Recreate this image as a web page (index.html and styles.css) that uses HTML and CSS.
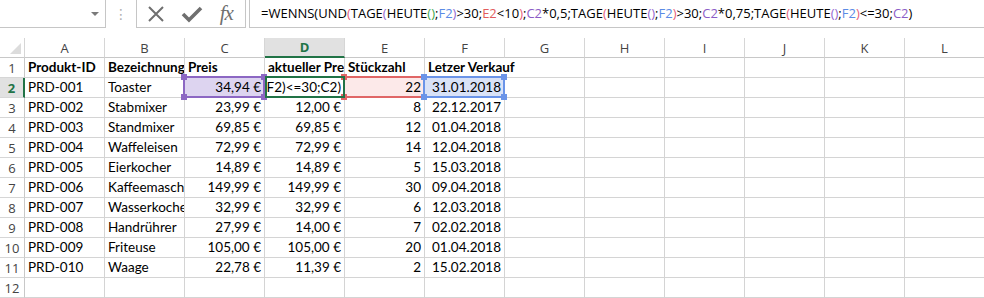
FILE: index.html
```html
<!DOCTYPE html>
<html lang="de">
<head>
    <meta charset="UTF-8">
    <title>Produkte</title>
    <link rel="stylesheet" href="styles.css">
</head>
<body>

    <!-- Formula bar -->
    <div class="formula-bar">
        <div class="name-box"><span class="caret"></span></div>
        <div class="grip">&#8942;</div>
        <div class="fx-box">
            <svg width="18" height="18" viewBox="0 0 18 18"><path d="M2 2 L16 16 M16 2 L2 16" stroke="#6f6f6f" stroke-width="2" fill="none"/></svg>
            <svg width="22" height="18" viewBox="0 0 22 18"><path d="M2 9 L8 15 L20 3" stroke="#6f6f6f" stroke-width="3.6" fill="none"/></svg>
            <span class="fx">fx</span>
        </div>
        <div class="formula-input">=WENNS(UND<span class="p1">(</span>TAGE<span class="p2">(</span>HEUTE<span class="p3">()</span>;<span class="rf">F2</span><span class="p2">)</span>&gt;30;<span class="re">E2</span>&lt;10<span class="p1">)</span>;<span class="rc">C2</span>*0,5;TAGE<span class="p1">(</span>HEUTE<span class="p2">()</span>;<span class="rf">F2</span><span class="p1">)</span>&gt;30;<span class="rc">C2</span>*0,75;TAGE<span class="p1">(</span>HEUTE<span class="p2">()</span>;<span class="rf">F2</span><span class="p1">)</span>&lt;=30;<span class="rc">C2</span>)</div>
    </div>

    <!-- Sheet -->
    <div class="sheet">
        <div class="h corner"><span class="tri"></span></div>
        <div class="h">A</div><div class="h">B</div><div class="h">C</div><div class="h sel">D</div>
        <div class="h">E</div><div class="h">F</div><div class="h">G</div><div class="h">H</div>
        <div class="h">I</div><div class="h">J</div><div class="h">K</div><div class="h">L</div>

        <div class="rh">1</div>
        <div class="c b">Produkt-ID</div><div class="c b">Bezeichnung</div><div class="c b">Preis</div><div class="c b">aktueller Preis</div>
        <div class="c b">Stückzahl</div><div class="c b spill">Letzer Verkauf</div><div class="c"></div><div class="c"></div>
        <div class="c"></div><div class="c"></div><div class="c"></div><div class="c"></div>

        <div class="rh sel">2</div>
        <div class="c">PRD-001</div><div class="c">Toaster</div>
        <div class="c r fill-c">34,94 €<span class="range range-c"><i class="tl"></i><i class="tr"></i><i class="bl"></i><i class="br"></i></span></div>
        <div class="c edit"><div class="edit-clip"><span class="edit-text">=WENNS(UND(TAGE(HEUTE();F2)&gt;30;E2&lt;10);C2*0,5;TAGE(HEUTE();F2)&gt;30;C2*0,75;TAGE(HEUTE();F2)&lt;=30;C2)</span></div><span class="active"></span></div>
        <div class="c r fill-e">22<span class="range range-e"><i class="tl"></i><i class="tr"></i><i class="bl"></i><i class="br"></i></span></div>
        <div class="c r fill-f">31.01.2018<span class="range range-f"><i class="tl"></i><i class="tr"></i><i class="bl"></i><i class="br"></i></span></div>
        <div class="c"></div><div class="c"></div><div class="c"></div><div class="c"></div><div class="c"></div><div class="c"></div>

        <div class="rh">3</div>
        <div class="c">PRD-002</div><div class="c">Stabmixer</div><div class="c r">23,99 €</div><div class="c r">12,00 €</div><div class="c r">8</div><div class="c r">22.12.2017</div>
        <div class="c"></div><div class="c"></div><div class="c"></div><div class="c"></div><div class="c"></div><div class="c"></div>

        <div class="rh">4</div>
        <div class="c">PRD-003</div><div class="c">Standmixer</div><div class="c r">69,85 €</div><div class="c r">69,85 €</div><div class="c r">12</div><div class="c r">01.04.2018</div>
        <div class="c"></div><div class="c"></div><div class="c"></div><div class="c"></div><div class="c"></div><div class="c"></div>

        <div class="rh">5</div>
        <div class="c">PRD-004</div><div class="c">Waffeleisen</div><div class="c r">72,99 €</div><div class="c r">72,99 €</div><div class="c r">14</div><div class="c r">12.04.2018</div>
        <div class="c"></div><div class="c"></div><div class="c"></div><div class="c"></div><div class="c"></div><div class="c"></div>

        <div class="rh">6</div>
        <div class="c">PRD-005</div><div class="c">Eierkocher</div><div class="c r">14,89 €</div><div class="c r">14,89 €</div><div class="c r">5</div><div class="c r">15.03.2018</div>
        <div class="c"></div><div class="c"></div><div class="c"></div><div class="c"></div><div class="c"></div><div class="c"></div>

        <div class="rh">7</div>
        <div class="c">PRD-006</div><div class="c">Kaffeemaschine</div><div class="c r">149,99 €</div><div class="c r">149,99 €</div><div class="c r">30</div><div class="c r">09.04.2018</div>
        <div class="c"></div><div class="c"></div><div class="c"></div><div class="c"></div><div class="c"></div><div class="c"></div>

        <div class="rh">8</div>
        <div class="c">PRD-007</div><div class="c">Wasserkocher</div><div class="c r">32,99 €</div><div class="c r">32,99 €</div><div class="c r">6</div><div class="c r">12.03.2018</div>
        <div class="c"></div><div class="c"></div><div class="c"></div><div class="c"></div><div class="c"></div><div class="c"></div>

        <div class="rh">9</div>
        <div class="c">PRD-008</div><div class="c">Handrührer</div><div class="c r">27,99 €</div><div class="c r">14,00 €</div><div class="c r">7</div><div class="c r">02.02.2018</div>
        <div class="c"></div><div class="c"></div><div class="c"></div><div class="c"></div><div class="c"></div><div class="c"></div>

        <div class="rh">10</div>
        <div class="c">PRD-009</div><div class="c">Friteuse</div><div class="c r">105,00 €</div><div class="c r">105,00 €</div><div class="c r">20</div><div class="c r">01.04.2018</div>
        <div class="c"></div><div class="c"></div><div class="c"></div><div class="c"></div><div class="c"></div><div class="c"></div>

        <div class="rh">11</div>
        <div class="c">PRD-010</div><div class="c">Waage</div><div class="c r">22,78 €</div><div class="c r">11,39 €</div><div class="c r">2</div><div class="c r">15.02.2018</div>
        <div class="c"></div><div class="c"></div><div class="c"></div><div class="c"></div><div class="c"></div><div class="c"></div>

        <div class="rh">12</div>
        <div class="c"></div><div class="c"></div><div class="c"></div><div class="c"></div><div class="c"></div><div class="c"></div>
        <div class="c"></div><div class="c"></div><div class="c"></div><div class="c"></div><div class="c"></div><div class="c"></div>
    </div>

</body>
</html>
```

FILE: styles.css
```css
body {
    margin: 0;
    background-color: #ffffff;
    font-family: Lato, 'Noto Sans', sans-serif;
    overflow: hidden;
}

/* ---- formula bar ---- */

.formula-bar {
    display: flex;
    height: 28px;
}

.name-box {
    width: 106px;
    box-sizing: border-box;
    border-right: 1px solid #c6c6c6;
    border-bottom: 1px solid #c6c6c6;
    display: flex;
    align-items: center;
    justify-content: flex-end;
    padding-right: 6px;
}

.caret {
    width: 0;
    height: 0;
    border-left: 4px solid transparent;
    border-right: 4px solid transparent;
    border-top: 4px solid #7a7a7a;
}

.grip {
    width: 30px;
    display: flex;
    align-items: center;
    justify-content: center;
    color: #b0b0b0;
    font-family: 'DejaVu Sans', sans-serif;
    font-size: 14px;
}

.fx-box {
    width: 110px;
    box-sizing: border-box;
    border: 1px solid #c6c6c6;
    border-top: none;
    display: flex;
    align-items: center;
    justify-content: space-around;
    padding: 0 4px 0 2px;
}

.fx {
    font-family: 'Liberation Serif', serif;
    font-style: italic;
    font-size: 21px;
    color: #707070;
    letter-spacing: -1px;
}

.formula-input {
    flex: 1;
    margin-left: 3px;
    border-left: 1px solid #c6c6c6;
    border-bottom: 1px solid #c6c6c6;
    padding-left: 11px;
    font-family: 'Open Sans', sans-serif;
    font-size: 13px;
    line-height: 27px;
    color: #000;
    white-space: nowrap;
    overflow: hidden;
}

.p1 { color: #e8607a; }
.p2 { color: #9467cf; }
.p3 { color: #3fa74f; }
.rf { color: #5b8be6; }
.re { color: #e25c5c; }
.rc { color: #8b5cc6; }

/* ---- sheet ---- */

.sheet {
    margin-top: 10px;
    display: grid;
    grid-template-columns: 25px repeat(12, 80px);
    grid-auto-rows: 20px;
    width: 984px;
    overflow: hidden;
}

.h, .rh {
    box-sizing: border-box;
    font-family: 'Open Sans', sans-serif;
    font-size: 13px;
    color: #444;
    display: flex;
    align-items: center;
    justify-content: center;
    border-right: 1px solid #d6d6d6;
    border-bottom: 1px solid #c8c8c8;
}

.h.corner {
    position: relative;
}

.tri {
    position: absolute;
    right: 3px;
    bottom: 3px;
    width: 0;
    height: 0;
    border-left: 11px solid transparent;
    border-bottom: 11px solid #dcdcdc;
}

.h.sel {
    background-color: #e1e1e1;
    color: #217346;
    font-weight: 700;
    border-bottom: 2px solid #217346;
}

.rh {
    border-bottom: 1px solid #d6d6d6;
    border-right: 1px solid #c8c8c8;
}

.rh.sel {
    background-color: #e1e1e1;
    color: #217346;
    font-weight: 700;
    border-right: 2px solid #217346;
}

.c {
    position: relative;
    box-sizing: border-box;
    border-right: 1px solid #d4d4d4;
    border-bottom: 1px solid #d4d4d4;
    padding: 0 3px;
    font-size: 13.5px;
    line-height: 19px;
    color: #000;
    white-space: nowrap;
    overflow: hidden;
}

.c.b {
    font-weight: 700;
}

.c.r {
    text-align: right;
}

.c.spill {
    overflow: visible;
    border-right-color: transparent;
    z-index: 1;
}

.fill-c { background-color: #ddd4f0; overflow: visible; }
.fill-e { background-color: #fce9e9; overflow: visible; }
.fill-f { background-color: #d9e2f7; overflow: visible; }

/* range outlines round cells referenced by the formula */
.range {
    position: absolute;
    top: -2px;
    left: -2px;
    right: -1px;
    bottom: -1px;
    border: 2px solid;
    z-index: 2;
}

.range i {
    position: absolute;
    width: 6px;
    height: 6px;
}

.range .tl { top: -4px; left: -4px; }
.range .tr { top: -4px; right: -4px; }
.range .bl { bottom: -4px; left: -4px; }
.range .br { bottom: -4px; right: -4px; }

.range-c { border-color: #8c67c3; }
.range-c i { background-color: #8c67c3; }
.range-e { border-color: #e06666; }
.range-e i { background-color: #e06666; }
.range-f { border-color: #6b94e8; }
.range-f i { background-color: #6b94e8; }

/* active cell in edit mode: the tail of the formula stays visible */
.c.edit {
    overflow: visible;
    padding: 0;
}

.edit-clip {
    display: flex;
    justify-content: flex-end;
    overflow: hidden;
    height: 100%;
    padding-right: 3px;
}

.edit-text {
    flex-shrink: 0;
}

.active {
    position: absolute;
    top: -2px;
    left: 0;
    right: -1px;
    bottom: -1px;
    border: 2px solid #217346;
    z-index: 3;
}
```
